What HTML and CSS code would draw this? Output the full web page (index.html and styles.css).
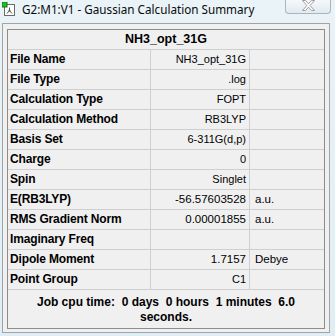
FILE: index.html
```html
<!DOCTYPE html>
<html>
<head>
<meta charset="utf-8">
<link rel="stylesheet" href="styles.css">
</head>
<body>
<div class="window">
  <div class="titlebar">
    <svg class="app-icon" width="14" height="15" viewBox="0 0 14 15">
      <rect x="2.5" y="2.5" width="10" height="11" fill="#fff" stroke="#6b6b6b"/>
      <rect x="0" y="0" width="5" height="5" fill="#22c022" stroke="#0a7a0a" stroke-width="1"/>
      <path d="M7.5 5.5v3M7.5 8.5l-2.5 3M7.5 8.5l2.5 3" stroke="#555" stroke-width="1" fill="none"/>
      <circle cx="7.5" cy="8.5" r="1" fill="#555"/>
    </svg>
    <span class="title">G2:M1:V1 - Gaussian Calculation Summary</span>
    <div class="close-btn">
      <svg width="15" height="11" viewBox="0 0 15 11">
        <path d="M1.5 0.5h3l3 3.3 3-3.3h3l-4.4 5 4.4 5h-3l-3-3.3-3 3.3h-3l4.4-5z" fill="#fff" stroke="#8a8a8a" stroke-width="0.8" stroke-linejoin="round"/>
      </svg>
    </div>
  </div>
  <div class="panel">
    <div class="summary">
      <div class="head">NH3_opt_31G</div>
      <div class="row"><div class="label">File Name</div><div class="value">NH3_opt_31G</div><div class="unit"></div></div>
      <div class="row"><div class="label">File Type</div><div class="value">.log</div><div class="unit"></div></div>
      <div class="row"><div class="label">Calculation Type</div><div class="value">FOPT</div><div class="unit"></div></div>
      <div class="row"><div class="label">Calculation Method</div><div class="value">RB3LYP</div><div class="unit"></div></div>
      <div class="row"><div class="label">Basis Set</div><div class="value">6-311G(d,p)</div><div class="unit"></div></div>
      <div class="row"><div class="label">Charge</div><div class="value">0</div><div class="unit"></div></div>
      <div class="row"><div class="label">Spin</div><div class="value">Singlet</div><div class="unit"></div></div>
      <div class="row"><div class="label">E(RB3LYP)</div><div class="value num">-56.57603528</div><div class="unit">a.u.</div></div>
      <div class="row"><div class="label">RMS Gradient Norm</div><div class="value num">0.00001855</div><div class="unit">a.u.</div></div>
      <div class="row"><div class="label">Imaginary Freq</div><div class="value"></div><div class="unit"></div></div>
      <div class="row"><div class="label">Dipole Moment</div><div class="value num">1.7157</div><div class="unit">Debye</div></div>
      <div class="row"><div class="label">Point Group</div><div class="value">C1</div><div class="unit"></div></div>
      <div class="foot">Job cpu time:&nbsp; 0 days&nbsp; 0 hours&nbsp; 1 minutes&nbsp; 6.0<br>seconds.</div>
    </div>
  </div>
</div>
</body>
</html>
```
FILE: styles.css
```css
html, body {
  margin: 0;
  padding: 0;
}
body {
  width: 335px;
  height: 336px;
  overflow: hidden;
  background: linear-gradient(180deg, #e9f3f8 0%, #dfeef6 100%);
  font-family: "Liberation Sans", Arial, sans-serif;
  color: #000;
}
.window {
  display: flex;
  flex-direction: column;
  height: 336px;
}
.titlebar {
  height: 23px;
  display: flex;
  align-items: flex-start;
  padding-left: 2px;
}
.app-icon {
  margin-top: 2px;
  flex: none;
}
.title {
  font-family: "Noto Sans", "Open Sans", sans-serif;
  font-size: 11.7px;
  line-height: 18px;
  margin-left: 6px;
  color: #0a0a0a;
  white-space: nowrap;
}
.close-btn {
  margin-left: auto;
  margin-right: 4px;
  width: 46px;
  height: 14px;
  box-sizing: border-box;
  border: 1px solid #a9b4bd;
  border-top: none;
  border-radius: 0 0 4px 4px;
  background: linear-gradient(180deg, #f4f8fb, #e2ebf1);
  display: flex;
  justify-content: center;
  align-items: flex-start;
  padding-top: 0;
}
.panel {
  margin: 0 5px 3px 2px;
  border: 1px solid #a3a3a3;
  background: #f0f0f0;
  padding: 5px 4px 3px 4px;
  flex: 1;
  display: flex;
  flex-direction: column;
}
.summary {
  border: 1px solid #8c8c8c;
  background: #f0f0f0;
  flex: 1;
  display: flex;
  flex-direction: column;
}
.head {
  height: 19px;
  line-height: 19px;
  border-bottom: 1px solid #cfcfcf;
  text-align: center;
  font-weight: bold;
  font-size: 12.5px;
}
.row {
  display: grid;
  grid-template-columns: 143px 99px 1fr;
  height: 19px;
  border-bottom: 1px solid #cfcfcf;
  line-height: 19px;
}
.label {
  border-right: 1px solid #cfcfcf;
  padding-left: 2px;
  font-weight: bold;
  font-size: 12px;
  letter-spacing: -0.15px;
  white-space: nowrap;
}
.value {
  border-right: 1px solid #cfcfcf;
  text-align: right;
  padding-right: 3px;
  font-size: 11px;
  white-space: nowrap;
}
.value.num {
  font-size: 11.5px;
}
.unit {
  padding-left: 5px;
  font-size: 11.5px;
}
.foot {
  flex: 1;
  text-align: center;
  font-weight: bold;
  font-size: 12px;
  line-height: 15px;
  padding-top: 5px;
}
```
